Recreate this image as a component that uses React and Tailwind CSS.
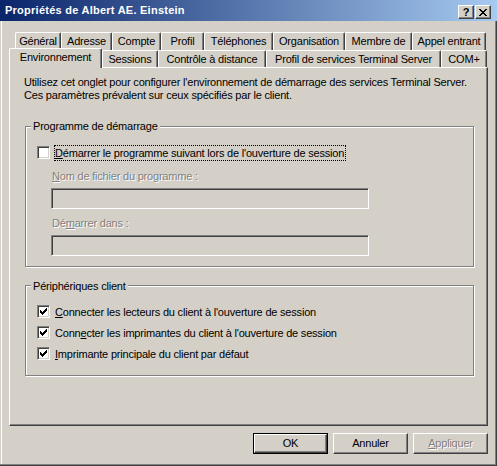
import React from "react";

const ROW1 = [
  ["Général", "w-[46px]"],
  ["Adresse", "w-[51px]"],
  ["Compte", "w-[49px]"],
  ["Profil", "w-[43px]"],
  ["Téléphones", "w-[69px]"],
  ["Organisation", "w-[72px]"],
  ["Membre de", "w-[67px]"],
  ["Appel entrant", "w-[74px]"],
];

const ROW2 = [
  ["Environnement", "w-[93px]", true],
  ["Sessions", "w-[56px]"],
  ["Contrôle à distance", "w-[108px]"],
  ["Profil de services Terminal Server", "w-[175px]"],
  ["COM+", "w-[46px]"],
];

const tabBase =
  "flex items-center justify-center bg-[#d4d0c8] border-l border-t border-r border-l-white border-t-white border-r-[#404040] shadow-[inset_-1px_0_0_#808080] rounded-t-[2px] whitespace-nowrap";

function Tab({ label, w, selected, back }) {
  if (selected) {
    return (
      <div className={`${tabBase} ${w} h-[20px] -mb-px pb-[2px] relative z-10`}>
        {label}
      </div>
    );
  }
  return <div className={`${tabBase} ${w} ${back ? "h-[18px]" : "h-[17px]"}`}>{label}</div>;
}

function Check({ checked }) {
  return (
    <span className="w-[13px] h-[13px] shrink-0 bg-white border border-t-[#808080] border-l-[#808080] border-b-white border-r-white shadow-[inset_1px_1px_0_#404040,inset_-1px_-1px_0_#d4d0c8] flex items-center justify-center">
      {checked && (
        <svg width="7" height="7" viewBox="0 0 7 7" shapeRendering="crispEdges">
          <rect x="6" y="0" width="1" height="1" />
          <rect x="5" y="1" width="2" height="1" />
          <rect x="0" y="2" width="1" height="1" />
          <rect x="4" y="2" width="3" height="1" />
          <rect x="0" y="3" width="2" height="1" />
          <rect x="3" y="3" width="3" height="1" />
          <rect x="0" y="4" width="5" height="1" />
          <rect x="1" y="5" width="3" height="1" />
          <rect x="2" y="6" width="1" height="1" />
        </svg>
      )}
    </span>
  );
}

function Field() {
  return (
    <div className="w-[318px] h-[21px] border border-t-[#808080] border-l-[#808080] border-b-white border-r-white shadow-[inset_1px_1px_0_#404040,inset_-1px_-1px_0_#d4d0c8] bg-[#d4d0c8]" />
  );
}

function Group({ title, className, top, children }) {
  return (
    <div
      className={`relative ml-[15px] w-[449px] border border-[#808080] shadow-[inset_1px_1px_0_#fff,1px_1px_0_#fff] ${className}`}
    >
      <span className={`absolute left-[5px] ${top} px-[2px] bg-[#d4d0c8] leading-[13px]`}>{title}</span>
      {children}
    </div>
  );
}

function CheckRow({ checked, children, focus }) {
  return (
    <div className="flex items-center h-[21px]">
      <Check checked={checked} />
      <span
        className={`ml-[4px] border leading-[14px] pr-[1px] ${
          focus ? "border-dotted border-black" : "border-transparent"
        }`}
      >
        {children}
      </span>
    </div>
  );
}

function Button({ children, isDefault, disabled }) {
  const bevel =
    "h-full w-full flex items-center justify-center border border-t-white border-l-white border-r-[#404040] border-b-[#404040] shadow-[inset_-1px_-1px_0_#808080]";
  return (
    <div className={`w-[75px] h-[21px] ${isDefault ? "border border-black" : ""}`}>
      <div className={`${bevel} ${disabled ? "text-[#808080] [text-shadow:1px_1px_0_#fff]" : ""}`}>
        {children}
      </div>
    </div>
  );
}

function TitleButton({ children }) {
  return (
    <div className="w-[16px] h-[14px] bg-[#d4d0c8] flex items-center justify-center border border-t-white border-l-white border-r-[#404040] border-b-[#404040] shadow-[inset_-1px_-1px_0_#808080]">
      {children}
    </div>
  );
}

export default function App() {
  const dis = "text-[#808080] [text-shadow:1px_1px_0_#fff]";
  return (
    <div className="w-[497px] h-[466px] bg-[#d4d0c8] text-black text-[11px] leading-[13px] tracking-[-0.2px] font-['Liberation_Sans',Arial,sans-serif] shadow-[inset_-1px_-1px_0_#404040,inset_-2px_-2px_0_#808080,inset_1px_0_0_#d4d0c8,inset_2px_0_0_#fff] flex flex-col select-none">
      {/* title bar */}
      <div className="h-[21px] flex items-center pl-[5px] pr-[6px] bg-[linear-gradient(to_right,#0a246a,#a6caf0)]">
        <span className="text-white font-bold tracking-[0.25px] flex-1">Propriétés de Albert AE. Einstein</span>
        <div className="flex gap-[1px] self-start mt-[5px] tracking-normal">
          <TitleButton>
            <span className="font-bold text-[11px] leading-none">?</span>
          </TitleButton>
          <TitleButton>
            <svg width="8" height="7" viewBox="0 0 8 7" shapeRendering="crispEdges">
              <rect x="0" y="0" width="2" height="1" />
              <rect x="6" y="0" width="2" height="1" />
              <rect x="1" y="1" width="2" height="1" />
              <rect x="5" y="1" width="2" height="1" />
              <rect x="2" y="2" width="4" height="1" />
              <rect x="3" y="3" width="2" height="1" />
              <rect x="2" y="4" width="4" height="1" />
              <rect x="1" y="5" width="2" height="1" />
              <rect x="5" y="5" width="2" height="1" />
              <rect x="0" y="6" width="2" height="1" />
              <rect x="6" y="6" width="2" height="1" />
            </svg>
          </TitleButton>
        </div>
      </div>

      {/* tabs */}
      <div className="mt-[11px] ml-[15px] flex">
        {ROW1.map(([l, w]) => (
          <Tab key={l} label={l} w={w} back />
        ))}
      </div>
      <div className="ml-[9px] h-[17px] flex items-end">
        {ROW2.map(([l, w, s]) => (
          <Tab key={l} label={l} w={w} selected={s} />
        ))}
      </div>

      {/* panel */}
      <div className="ml-[9px] w-[479px] h-[359px] border border-t-white border-l-white border-r-[#404040] border-b-[#404040] shadow-[inset_-1px_-1px_0_#808080] flex flex-col">
        <p className="mt-[8px] ml-[14px]">
          Utilisez cet onglet pour configurer l'environnement de démarrage des services Terminal Server.
          <br />
          Ces paramètres prévalent sur ceux spécifiés par le client.
        </p>

        <Group title="Programme de démarrage" className="mt-[24px] h-[141px]" top="-top-[7px]">
          <div className="mt-[15px] ml-[11px]">
            <CheckRow focus>
              <u>D</u>émarrer le programme suivant lors de l'ouverture de session
            </CheckRow>
          </div>
          <div className="ml-[25px] flex flex-col">
            <span className={`mt-[7px] pl-[1px] ${dis}`}>
              <u>N</u>om de fichier du programme :
            </span>
            <div className="mt-[5px]">
              <Field />
            </div>
            <span className={`mt-[8px] pl-[1px] ${dis}`}>
              Dé<u>m</u>arrer dans :
            </span>
            <div className="mt-[5px]">
              <Field />
            </div>
          </div>
        </Group>

        <Group title="Périphériques client" className="mt-[18px] h-[91px]" top="-top-[6px]">
          <div className="mt-[15px] ml-[11px] flex flex-col">
            <CheckRow checked>
              <u>C</u>onnecter les lecteurs du client à l'ouverture de session
            </CheckRow>
            <CheckRow checked>
              Conn<u>e</u>cter les imprimantes du client à l'ouverture de session
            </CheckRow>
            <CheckRow checked>
              <u>I</u>mprimante principale du client par défaut
            </CheckRow>
          </div>
        </Group>
      </div>

      {/* buttons */}
      <div className="mt-[7px] pr-[9px] flex justify-end gap-[5px]">
        <Button isDefault>OK</Button>
        <Button>Annuler</Button>
        <Button disabled>
          <span>
            <u>A</u>ppliquer
          </span>
        </Button>
      </div>
    </div>
  );
}
